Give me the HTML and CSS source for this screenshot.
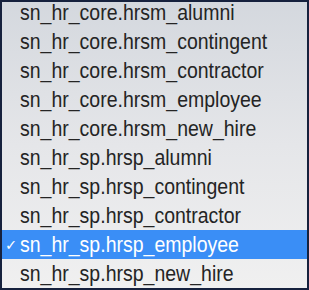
FILE: index.html
```html
<!DOCTYPE html>
<html>
<head>
<meta charset="utf-8">
<link rel="stylesheet" href="styles.css">
</head>
<body>
<div class="menu">
  <ul class="list">
    <li class="item"><span class="check"></span><span class="label">sn_hr_core.hrsm_alumni</span></li>
    <li class="item"><span class="check"></span><span class="label">sn_hr_core.hrsm_contingent</span></li>
    <li class="item"><span class="check"></span><span class="label">sn_hr_core.hrsm_contractor</span></li>
    <li class="item"><span class="check"></span><span class="label">sn_hr_core.hrsm_employee</span></li>
    <li class="item"><span class="check"></span><span class="label">sn_hr_core.hrsm_new_hire</span></li>
    <li class="item"><span class="check"></span><span class="label">sn_hr_sp.hrsp_alumni</span></li>
    <li class="item"><span class="check"></span><span class="label">sn_hr_sp.hrsp_contingent</span></li>
    <li class="item"><span class="check"></span><span class="label">sn_hr_sp.hrsp_contractor</span></li>
    <li class="item selected"><span class="check">✓</span><span class="label">sn_hr_sp.hrsp_employee</span></li>
    <li class="item"><span class="check"></span><span class="label">sn_hr_sp.hrsp_new_hire</span></li>
  </ul>
</div>
</body>
</html>
```
FILE: styles.css
```css
html, body {
  margin: 0;
  padding: 0;
  background: #ffffff;
}
.menu {
  box-sizing: border-box;
  width: 309px;
  height: 290px;
  border: 2px solid #16213d;
  overflow: hidden;
  background: linear-gradient(to bottom, #d4d8de 0%, #e5e6e9 50%, #f0f0f0 100%);
}
.list {
  list-style: none;
  margin: -4px 0 0 0;
  padding: 0;
}
.item {
  display: flex;
  align-items: center;
  height: 29px;
  font-family: "Liberation Sans", Arial, sans-serif;
  font-size: 19.5px;
  color: #242424;
  white-space: nowrap;
}
.label {
  display: inline-block;
  transform: scaleY(1.12);
  transform-origin: center;
}
.check {
  width: 15px;
  flex: 0 0 15px;
  font-size: 14.5px;
  padding-left: 3px;
  font-family: "DejaVu Sans", sans-serif;
}
.item.selected {
  background: #3a8ef6;
  color: #ffffff;
}
```
